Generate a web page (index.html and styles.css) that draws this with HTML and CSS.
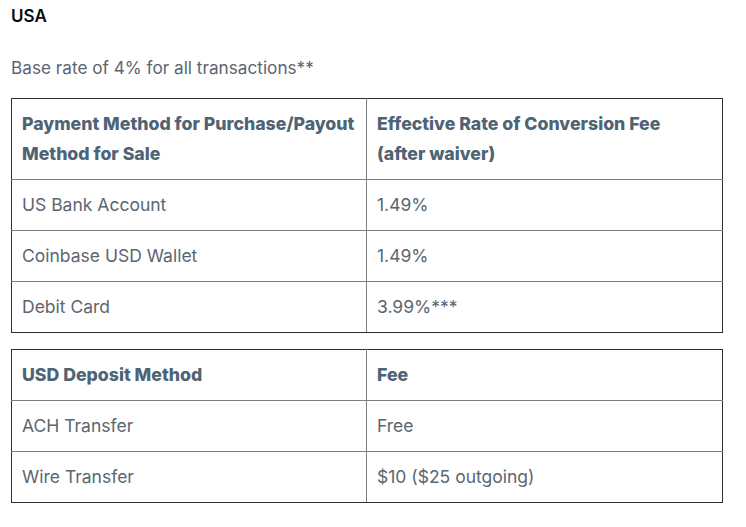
FILE: index.html
```html
<!DOCTYPE html>
<html>
<head>
<meta charset="utf-8">
<link rel="stylesheet" href="styles.css">
</head>
<body>
<div class="page">
  <h3 class="title">USA</h3>
  <p class="intro">Base rate of 4% for all transactions**</p>
  <table class="fees">
    <colgroup><col class="c1"><col class="c2"></colgroup>
    <tr><th>Payment Method for Purchase/Payout<br>Method for Sale</th><th>Effective Rate of Conversion Fee<br>(after waiver)</th></tr>
    <tr><td>US Bank Account</td><td>1.49%</td></tr>
    <tr><td>Coinbase USD Wallet</td><td>1.49%</td></tr>
    <tr><td>Debit Card</td><td>3.99%***</td></tr>
  </table>
  <table class="fees second">
    <colgroup><col class="c1"><col class="c2"></colgroup>
    <tr><th>USD Deposit Method</th><th>Fee</th></tr>
    <tr><td>ACH Transfer</td><td>Free</td></tr>
    <tr><td>Wire Transfer</td><td>$10 ($25 outgoing)</td></tr>
  </table>
</div>
</body>
</html>
```
FILE: styles.css
```css
html, body { margin: 0; padding: 0; background: #fff; }
body { font-family: Inter, "Noto Sans", sans-serif; }
.page { padding: 4px 11px 0 11px; }
.title { margin: 0; font-size: 17px; line-height: 24px; font-weight: 600; color: #0a0b0d; }
.intro { margin: 27px 0 0 0; font-size: 17.2px; line-height: 26px; color: #5b6670; }
.fees { margin-top: 17px; width: 712px; border-collapse: collapse; border: 1px solid #2b2f33; table-layout: fixed; }
.fees.second { margin-top: 16px; }
.c1 { width: 355px; }
.fees th, .fees td { border: 1px solid #7a7f84; padding: 10px 10px; text-align: left; vertical-align: top; font-size: 17.5px; line-height: 30px; }
.fees th { font-weight: 800; color: #4e6475; font-size: 17.7px; white-space: nowrap; }
.fees td { font-weight: 400; color: #5b6670; }
.fees tr:first-child th { border-top-color: #2b2f33; }
.fees tr th:first-child, .fees tr td:first-child { border-left-color: #2b2f33; }
.fees tr th:last-child, .fees tr td:last-child { border-right-color: #2b2f33; }
.fees tr:last-child td { border-bottom-color: #2b2f33; }
```
